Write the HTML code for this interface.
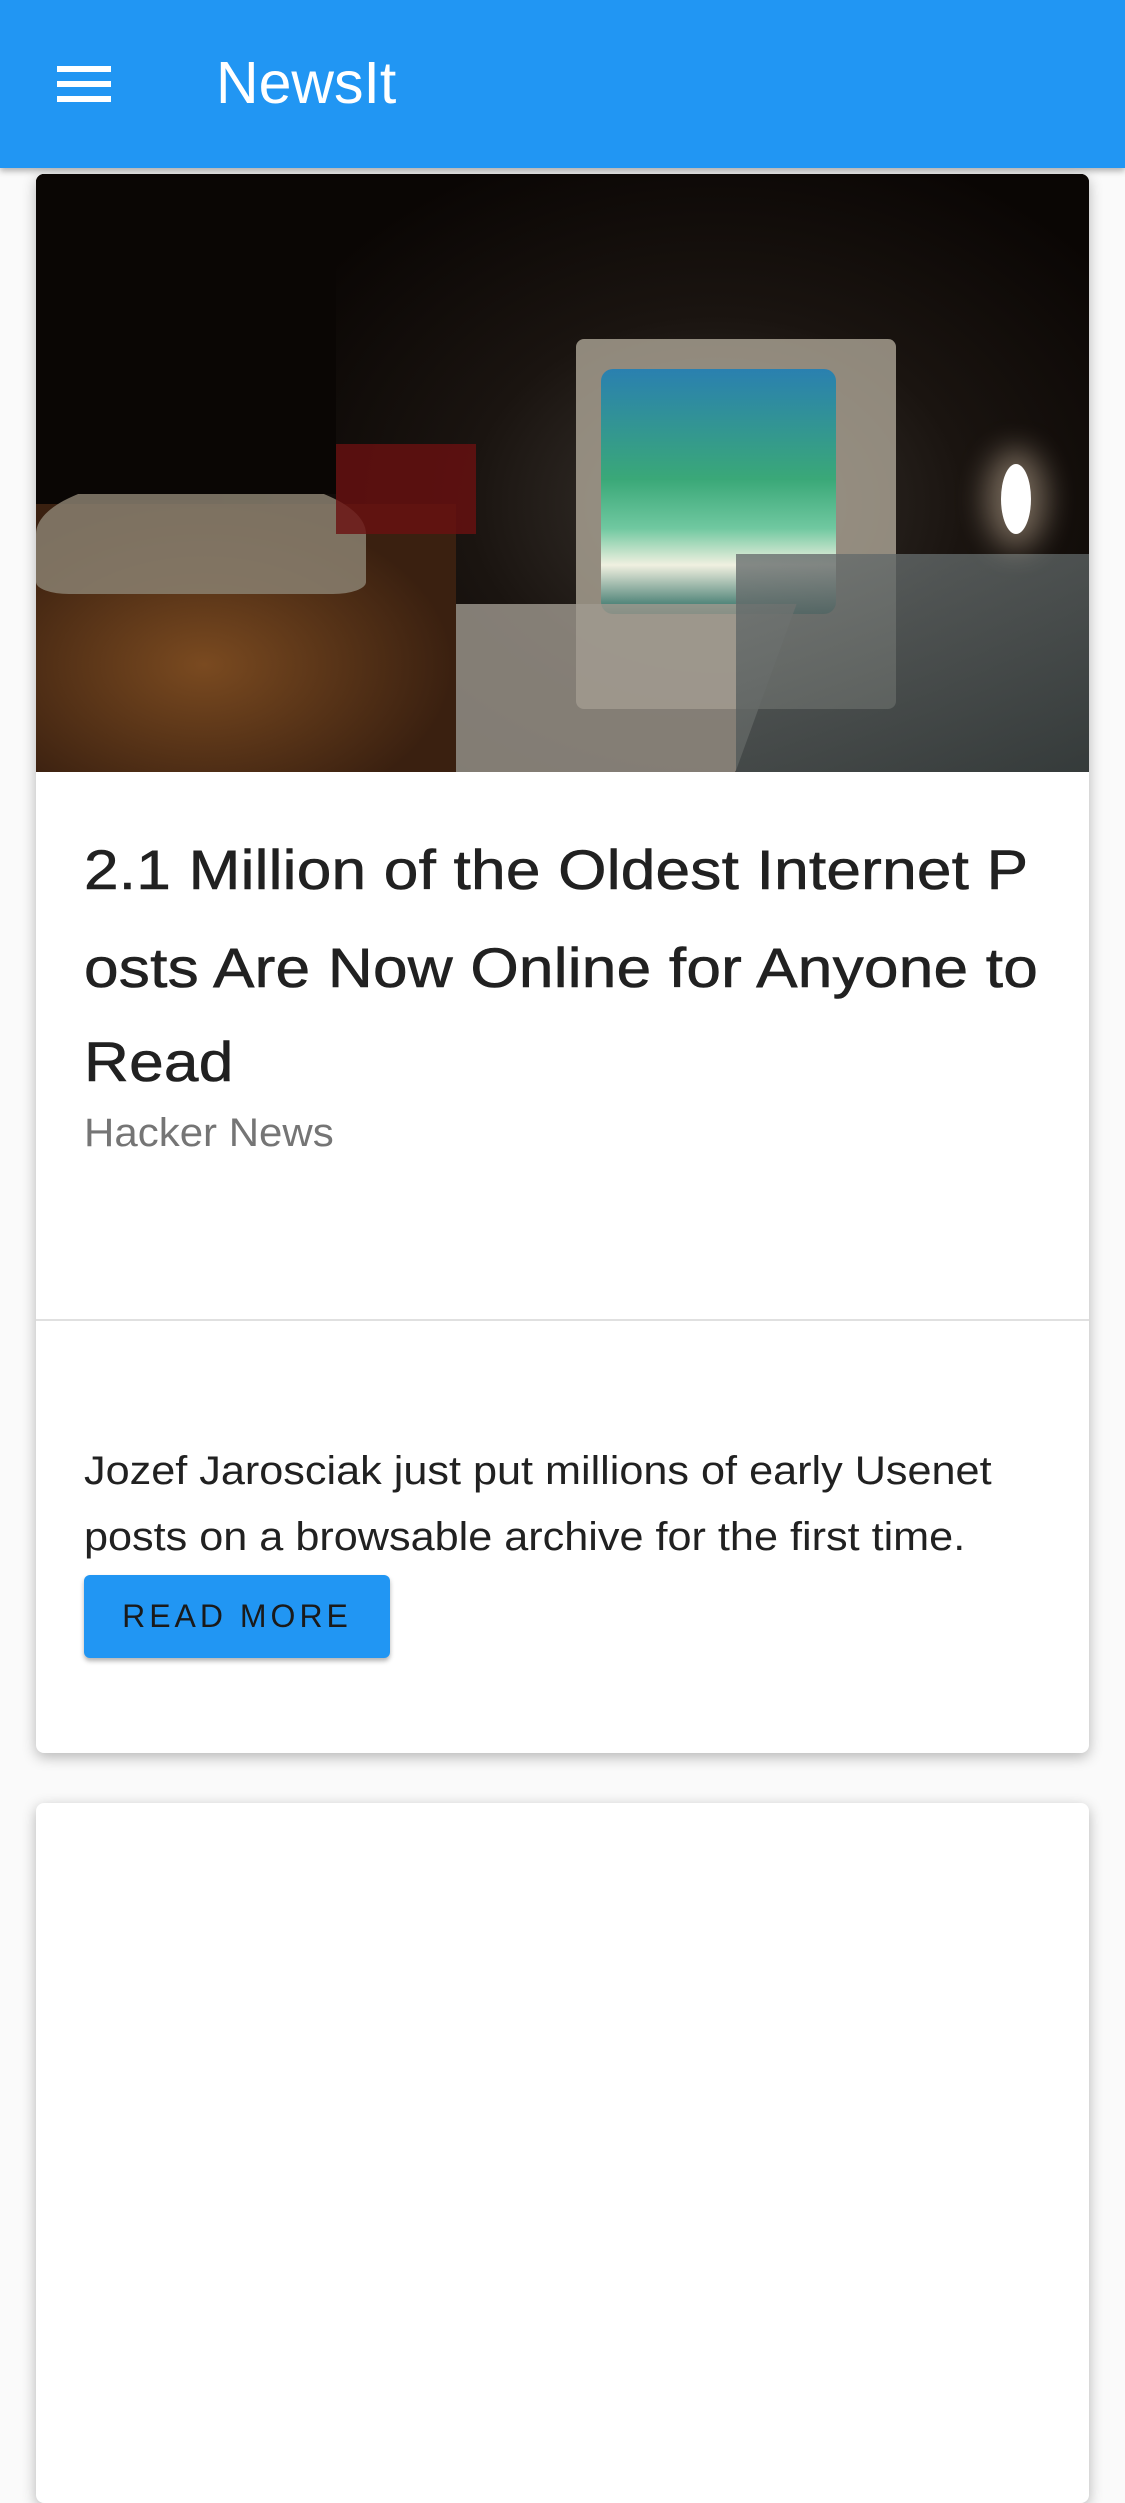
<!DOCTYPE html>
<html><head><meta charset="utf-8"><style>
*{margin:0;padding:0;box-sizing:border-box}
body{width:1125px;height:2436px;background:#fafafa;font-family:"Liberation Sans",sans-serif;position:relative;overflow:hidden}
.hdr{position:absolute;left:0;top:0;width:1125px;height:168px;background:#2196F3;box-shadow:0 3px 6px rgba(0,0,0,.3);z-index:2}
.bar{position:absolute;left:57px;width:54px;height:6px;background:#fff}
.ttl{position:absolute;left:216px;top:48px;font-size:59px;color:#fff;line-height:70px}
.card{position:absolute;left:36px;width:1053px;background:#fff;border-radius:8px;box-shadow:0 4px 14px rgba(0,0,0,.28);overflow:hidden}
.img{position:absolute;left:0;top:0;width:1053px;height:598px;background:#0d0806;overflow:hidden}
.img div{position:absolute}
.t{position:absolute;left:48px;font-size:56px;color:#212121;white-space:nowrap;transform-origin:left;transform:scaleX(1.11);letter-spacing:.2px;-webkit-text-stroke:.6px #212121}
.d{position:absolute;left:48px;font-size:40px;color:#212121;white-space:nowrap;transform-origin:left;transform:scaleX(1.08)}
</style></head><body>
<div class="hdr">
<div class="bar" style="top:66px"></div><div class="bar" style="top:81px"></div><div class="bar" style="top:96px"></div>
<div class="ttl">NewsIt</div>
</div>
<div class="card" style="top:174px;height:1579px">
<div class="img">
<div style="left:0;top:0;width:1053px;height:598px;background:radial-gradient(ellipse 500px 380px at 680px 330px,#3a3530 0%,#1a1410 50%,#0a0604 100%)"></div>
<div style="left:540px;top:165px;width:320px;height:370px;background:#b8b0a0;border-radius:8px;opacity:.75"></div>
<div style="left:565px;top:195px;width:235px;height:245px;background:linear-gradient(180deg,#2a80b0 0%,#3aa878 45%,#70c8a0 65%,#f0f0e0 80%,#2a6a60 100%);border-radius:12px"></div>
<div style="left:330px;top:430px;width:400px;height:168px;background:#a09a90;transform:skewX(-20deg);opacity:.8"></div>
<div style="left:700px;top:380px;width:353px;height:218px;background:linear-gradient(160deg,#6a7070,#404848);opacity:.8"></div>
<div style="left:0;top:330px;width:420px;height:268px;background:radial-gradient(ellipse at 40% 60%,#7a4a20,#3a2010 70%)"></div>
<div style="left:0;top:300px;width:330px;height:120px;background:#8a8070;border-radius:50% 50% 10% 10%;opacity:.85"></div>
<div style="left:0;top:0;width:300px;height:320px;background:#0a0604"></div>
<div style="left:300px;top:270px;width:140px;height:90px;background:#6a1010;opacity:.8"></div>
<div style="left:965px;top:290px;width:30px;height:70px;background:#fff;border-radius:50%;box-shadow:0 0 30px 15px rgba(255,230,200,.4)"></div>
</div>
<div class="t" style="top:663px">2.1 Million of the Oldest Internet P</div>
<div class="t" style="top:761px">osts Are Now Online for Anyone to</div>
<div class="t" style="top:855px">Read</div>
<div class="d" style="top:937px;color:#757575;transform:scaleX(1.05)">Hacker News</div>
<div style="position:absolute;left:0;top:1145px;width:1053px;height:2px;background:#e0e0e0"></div>
<div class="d" style="top:1275px">Jozef Jarosciak just put millions of early Usenet</div>
<div class="d" style="top:1341px">posts on a browsable archive for the first time.</div>
<div style="position:absolute;left:48px;top:1401px;width:306px;height:83px;background:#2196F3;border-radius:6px;box-shadow:0 3px 5px rgba(0,0,0,.3);color:#1a1a1a;font-size:32px;letter-spacing:4px;text-align:center;line-height:83px">READ MORE</div>
</div>
<div class="card" style="top:1803px;height:700px"></div>
</body></html>
